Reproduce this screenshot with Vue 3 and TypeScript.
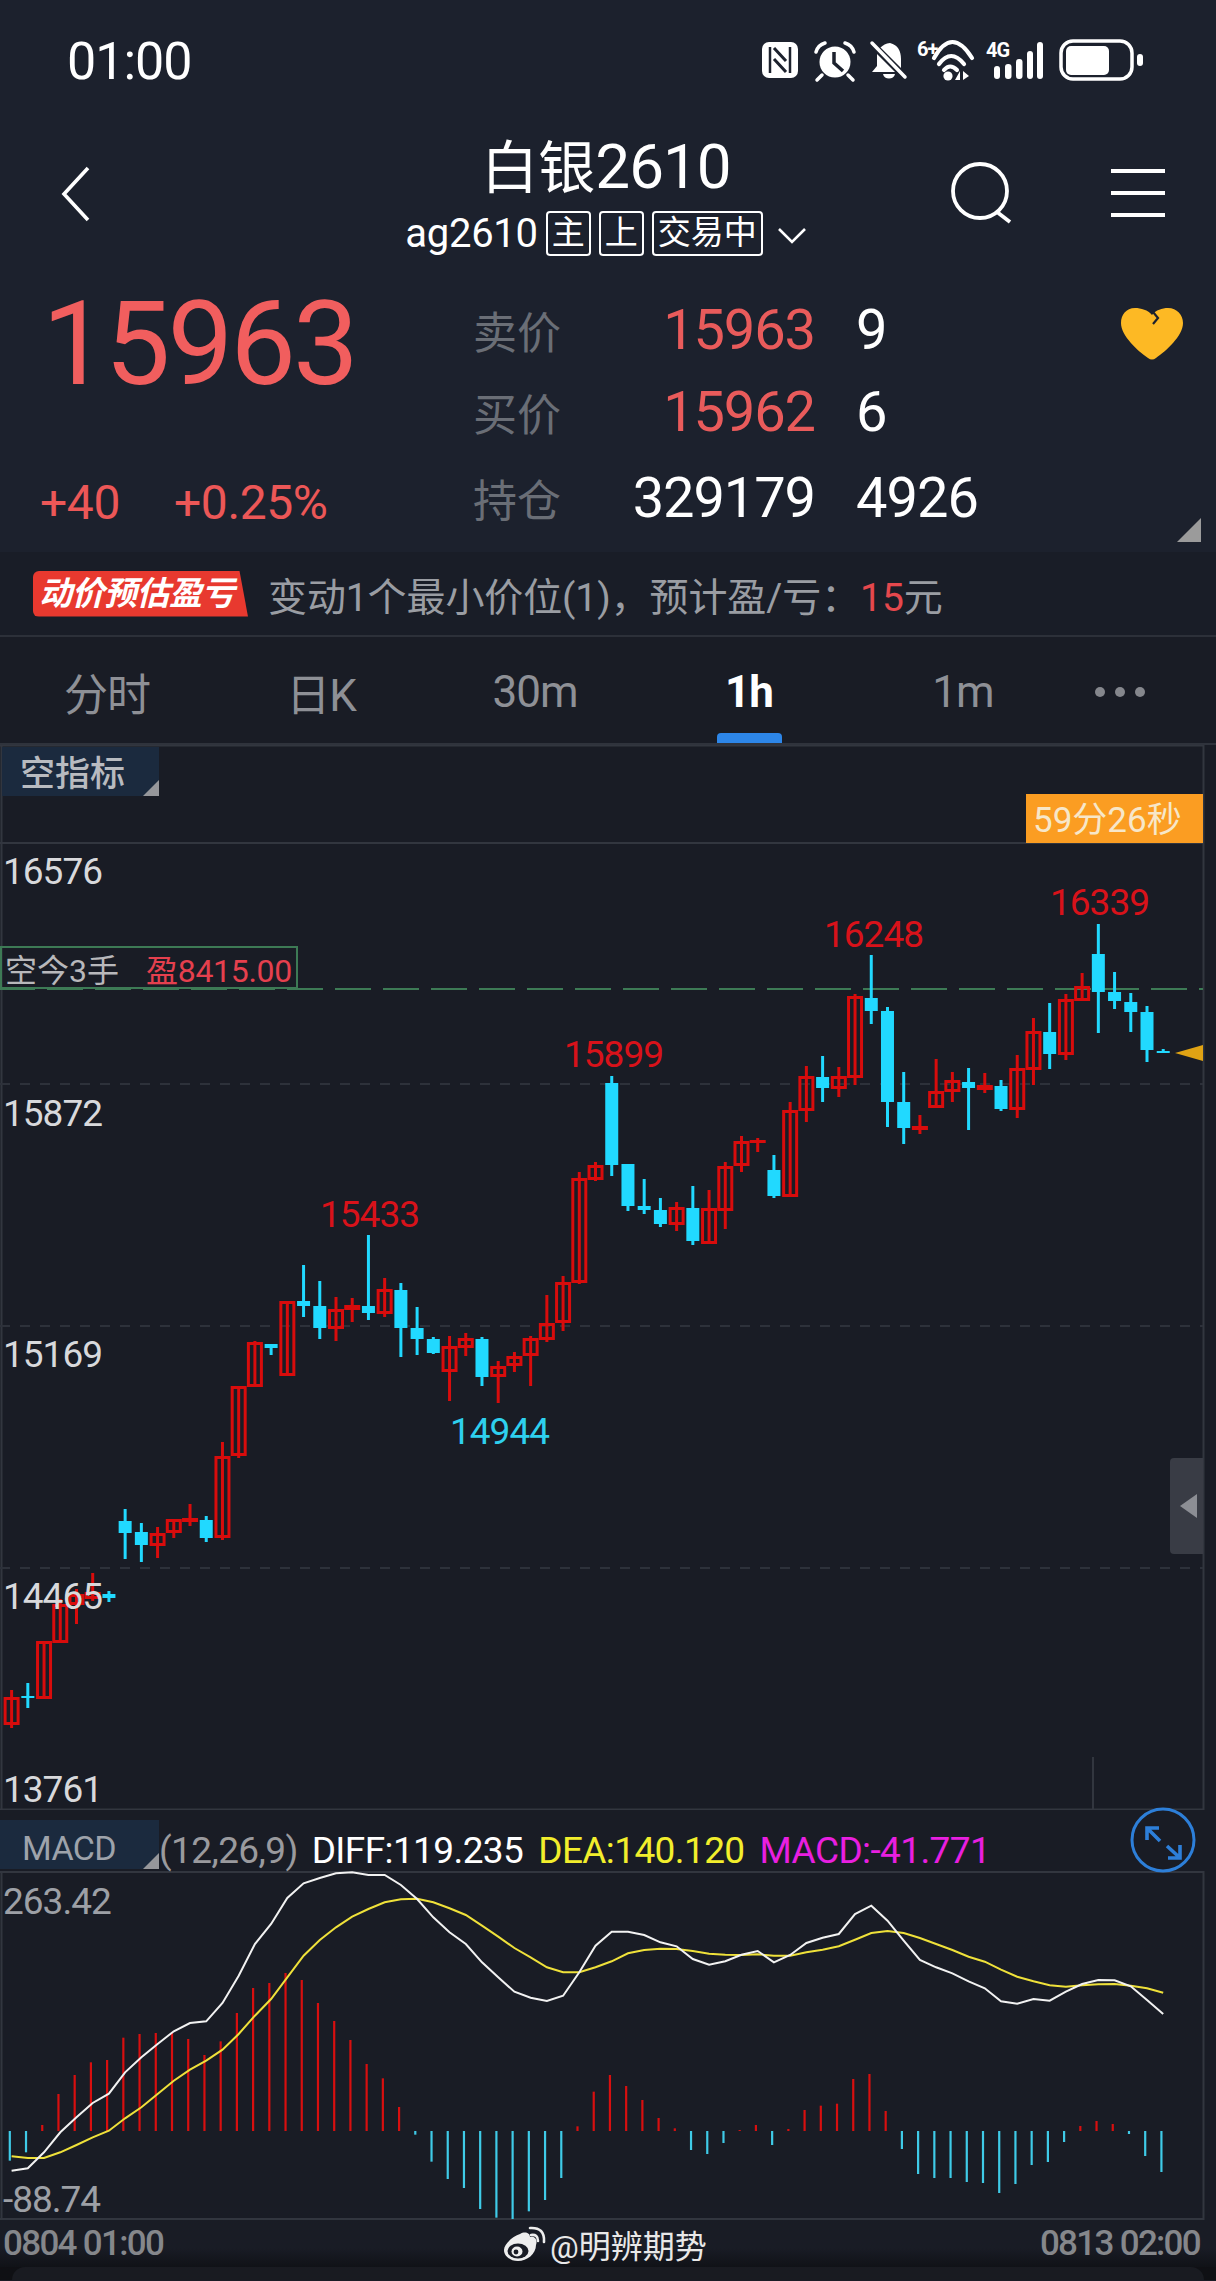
<script setup lang="ts">
type Candle = [number, number, number, number, "r" | "c"];

const step = 16.22;
const candleX = (i: number) => 11.6 + step * i;
const barX = (i: number) => 9.8 + step * i;

// wick top, body top, body bottom, wick bottom
const candles: Candle[] = [
  [1691, 1698, 1726, 1729, "r"], [1684, 1697, 1699, 1709, "c"], [1642, 1642, 1700, 1700, "r"],
  [1600, 1605, 1644, 1644, "r"], [1590, 1595, 1606, 1625, "r"], [1574, 1593, 1600, 1602, "r"],
  [1592, 1595, 1599, 1603, "c"], [1510, 1522, 1534, 1560, "c"], [1524, 1533, 1546, 1563, "c"],
  [1528, 1534, 1547, 1559, "r"], [1520, 1520, 1534, 1539, "r"], [1505, 1519, 1523, 1527, "r"],
  [1517, 1521, 1539, 1543, "c"], [1443, 1457, 1539, 1541, "r"], [1387, 1387, 1457, 1459, "r"],
  [1342, 1343, 1388, 1388, "r"], [1345, 1345, 1349, 1356, "c"], [1302, 1302, 1377, 1377, "r"],
  [1266, 1302, 1307, 1318, "c"], [1282, 1307, 1329, 1340, "c"], [1298, 1310, 1330, 1342, "r"],
  [1299, 1306, 1311, 1323, "r"], [1236, 1307, 1314, 1321, "c"], [1279, 1290, 1315, 1318, "r"],
  [1284, 1291, 1329, 1358, "c"], [1308, 1329, 1340, 1356, "c"], [1338, 1340, 1354, 1355, "c"],
  [1337, 1347, 1373, 1402, "r"], [1334, 1339, 1349, 1357, "r"], [1338, 1340, 1378, 1387, "c"],
  [1362, 1367, 1378, 1404, "r"], [1353, 1357, 1367, 1373, "r"], [1337, 1339, 1357, 1387, "r"],
  [1296, 1324, 1341, 1343, "r"], [1277, 1283, 1324, 1332, "r"], [1173, 1179, 1284, 1285, "r"],
  [1163, 1166, 1181, 1182, "r"], [1077, 1084, 1166, 1177, "c"], [1165, 1165, 1207, 1212, "c"],
  [1180, 1207, 1211, 1215, "c"], [1199, 1211, 1225, 1228, "c"], [1203, 1208, 1226, 1232, "r"],
  [1187, 1209, 1242, 1246, "c"], [1191, 1209, 1245, 1245, "r"], [1163, 1167, 1212, 1230, "r"],
  [1137, 1142, 1167, 1173, "r"], [1139, 1141, 1144, 1153, "r"], [1156, 1171, 1197, 1199, "c"],
  [1103, 1111, 1198, 1198, "r"], [1067, 1077, 1112, 1123, "r"], [1057, 1078, 1089, 1103, "c"],
  [1068, 1077, 1090, 1098, "r"], [995, 997, 1079, 1086, "r"], [956, 999, 1012, 1025, "c"],
  [1008, 1012, 1103, 1128, "c"], [1073, 1103, 1129, 1145, "c"], [1116, 1127, 1131, 1135, "r"],
  [1060, 1092, 1109, 1109, "r"], [1073, 1081, 1093, 1103, "r"], [1069, 1083, 1089, 1131, "c"],
  [1074, 1086, 1091, 1094, "r"], [1081, 1087, 1110, 1112, "c"], [1056, 1069, 1111, 1119, "r"],
  [1019, 1032, 1071, 1086, "r"], [1004, 1033, 1055, 1070, "c"], [995, 1000, 1056, 1061, "r"],
  [974, 987, 1002, 1002, "r"], [925, 955, 993, 1034, "c"], [973, 993, 1002, 1010, "c"],
  [994, 1003, 1013, 1033, "c"], [1007, 1013, 1051, 1063, "c"], [1050, 1052, 1054, 1054, "c"],
];

const priceLabels = [
  { text: "16576", y: 885 },
  { text: "15872", y: 1127 },
  { text: "15169", y: 1368 },
  { text: "14465", y: 1610 },
  { text: "13761", y: 1803 },
];

const peaks = [
  { text: "16339", x: 1050, y: 916, cls: "peak" },
  { text: "16248", x: 824, y: 948, cls: "peak" },
  { text: "15899", x: 564, y: 1068, cls: "peak" },
  { text: "15433", x: 320, y: 1228, cls: "peak" },
  { text: "14944", x: 450, y: 1445, cls: "trough" },
];

// macd values are in 3x crop units, 1800 is the crop's top edge
const toY = (v: number) => 1800 + v / 3;
const zero = toY(996);

const bars = [
  1085, 1060, 978, 885, 828, 790, 783, 716, 705, 702, 700, 720, 768, 727, 642, 567, 552, 522, 543,
  612, 666, 723, 795, 838, 924, 1007, 1088, 1140, 1167, 1230, 1256, 1260, 1237, 1203, 1137, 982,
  878, 828, 861, 903, 957, 988, 1053, 1065, 1032, 993, 978, 1038, 990, 933, 920, 914, 840, 825,
  936, 1050, 1125, 1137, 1137, 1149, 1152, 1182, 1155, 1098, 1089, 1029, 981, 966, 975, 1005, 1071,
  1119,
];

const diff = [
  1115, 1108, 1060, 1000, 955, 912, 884, 820, 775, 735, 697, 672, 667, 612, 530, 435, 375, 297, 253,
  237, 223, 220, 228, 228, 258, 300, 355, 400, 435, 490, 535, 578, 596, 606, 590, 520, 440, 398,
  398, 408, 430, 442, 480, 497, 487, 467, 456, 490, 468, 432, 416, 405, 345, 320, 365, 425, 483,
  505, 523, 547, 568, 607, 614, 600, 605, 578, 555, 543, 544, 562, 603, 645,
];

const dea = [
  1072, 1077, 1077, 1060, 1038, 1015, 995, 958, 925, 885, 845, 812, 785, 752, 705, 650, 600, 535,
  470, 423, 385, 353, 330, 310, 301, 299, 310, 328, 348, 380, 413, 447, 475, 505, 520, 520, 505,
  487, 463, 453, 449, 450, 456, 464, 467, 468, 466, 470, 470, 460, 452, 442, 422, 402, 396, 402,
  417, 435, 453, 473, 488, 512, 533, 547, 559, 563, 559, 556, 555, 560, 568, 581,
];

const points = (vals: number[]) =>
  vals.map((v, i) => `${candleX(i).toFixed(1)},${toY(v).toFixed(1)}`).join(" ");

const tabs = [
  { label: "分时" },
  { label: "日K" },
  { label: "30m" },
  { label: "1h", active: true },
  { label: "1m" },
];
</script>

<template>
  <div class="page">
    <header class="top">
      <div class="status">
        <span class="time">01:00</span>
        <svg class="status-icons" width="384" height="44" viewBox="0 0 384 44">
          <rect x="2" y="3" width="36" height="36" rx="7" fill="#fff" />
          <path d="M10 8V34M30 8V34" stroke="#1c212d" stroke-width="2.5" fill="none" />
          <path d="M14 9L26 22M14 20L26 33" stroke="#1c212d" stroke-width="3" fill="none" />
          <circle cx="75" cy="23" r="15.5" fill="#fff" />
          <path d="M74 13V24L83 32" stroke="#1c212d" stroke-width="3.5" fill="none" />
          <path d="M56 13Q58 6 65 4M94 13Q92 6 85 4M62 36L57 41M88 36L93 41" stroke="#fff" stroke-width="3.5" fill="none" stroke-linecap="round" />
          <path d="M130 4C138 6 141 12 141 20V30L144 33H112L117 27V16C117 11 122 5 130 4ZM123 35H135C134 41 124 41 123 35Z" fill="#fff" />
          <path d="M112 5L145 38" stroke="#1c212d" stroke-width="7" />
          <path d="M112 4L145 38" stroke="#fff" stroke-width="3.5" stroke-linecap="round" />
          <path d="M174 19Q192 -13 212 19M179 25Q191 9 204 25M184 31Q190 24 197 31" stroke="#fff" stroke-width="4.2" fill="none" stroke-linecap="round" />
          <text class="net" x="157" y="17">6+</text>
          <circle cx="188" cy="37" r="4.6" fill="#fff" />
          <path d="M200 32V41L195 41ZM203 32V41L209 37Z" fill="#fff" />
          <text class="net" x="226" y="18">4G</text>
          <rect x="234" y="27" width="6" height="13" rx="3" fill="#fff" />
          <rect x="245" y="25" width="6.5" height="15" rx="3" fill="#fff" />
          <rect x="256" y="20" width="6.5" height="20" rx="3" fill="#fff" />
          <rect x="267" y="12" width="6" height="28" rx="3" fill="#fff" />
          <rect x="277" y="3" width="6" height="37" rx="3" fill="#fff" />
          <rect x="301" y="2" width="71" height="38" rx="12" fill="none" stroke="#fff" stroke-width="3.5" />
          <rect x="306" y="7" width="43" height="29" rx="5" fill="#fff" />
          <rect x="377" y="15" width="6" height="12" rx="3" fill="#fff" />
        </svg>
      </div>

      <nav class="nav">
        <div class="nav-side">
          <svg class="back" width="30" height="56" viewBox="0 0 30 56">
            <path d="M28 2L4 28L28 54" stroke="#fff" stroke-width="3.6" fill="none" />
          </svg>
        </div>
        <div class="nav-mid">
          <div class="title">白银<span class="title-num">2610</span></div>
          <div class="sub">
            <span class="code">ag2610</span>
            <span class="badge">主</span>
            <span class="badge">上</span>
            <span class="badge">交易中</span>
            <svg class="chev" width="30" height="17" viewBox="0 0 30 17">
              <path d="M2 2L15 15L28 2" stroke="#fff" stroke-width="2.6" fill="none" />
            </svg>
          </div>
        </div>
        <div class="nav-side nav-right">
          <svg class="search" width="64" height="62" viewBox="0 0 64 62">
            <circle cx="30" cy="29" r="27" stroke="#fff" stroke-width="3.8" fill="none" />
            <path d="M47 50L60 60" stroke="#fff" stroke-width="3.8" />
          </svg>
          <svg class="menu" width="54" height="50" viewBox="0 0 54 50">
            <path d="M0 3H54M0 25H54M0 47H54" stroke="#fff" stroke-width="4" />
          </svg>
        </div>
      </nav>

      <section class="quote">
        <div class="quote-left">
          <div class="last">15963</div>
          <div class="change">
            <span>+40</span>
            <span>+0.25%</span>
          </div>
        </div>
        <div class="book">
          <div class="row">
            <span class="lbl">卖价</span>
            <span class="val up">15963</span>
            <span class="vol">9</span>
          </div>
          <div class="row">
            <span class="lbl">买价</span>
            <span class="val up">15962</span>
            <span class="vol">6</span>
          </div>
          <div class="row row-oi">
            <span class="lbl">持仓</span>
            <span class="val">329179</span>
            <span class="vol">4926</span>
          </div>
        </div>
        <svg class="heart" width="62" height="52" viewBox="0 0 62 52">
          <path d="M31 7C27 2 20 0 14 0C5 0 0 7 0 15C0 28 17 43 27 50Q31 53 35 50C45 43 62 28 62 15C62 7 56 0 47 0C41 0 35 2 31 7Z" fill="#fdb924" />
          <path d="M32 4L37 10L32 16" stroke="#1c212d" stroke-width="2.2" fill="none" />
        </svg>
        <span class="corner"></span>
      </section>
    </header>

    <div class="hint">
      <span class="hint-tag">动价预估盈亏</span>
      <span class="hint-text">变动1个最小价位(1)，预计盈/亏：<em>15</em>元</span>
    </div>

    <div class="tabs">
      <div v-for="t in tabs" :key="t.label" class="tab" :class="{ active: t.active }">
        {{ t.label }}
      </div>
      <div class="tab tab-more">
        <i></i><i></i><i></i>
      </div>
    </div>

    <section class="chart">
      <svg class="canvas" width="1216" height="1065" viewBox="0 746 1216 1065">
        <path d="M0 844H1203M0 1810.5H1203M1.5 746V1811M1203.5 746V1811M1093 1758V1810M0 746.5H1204" class="grid" />
        <path d="M0 1085H1203M0 1327H1203M0 1569H1203" class="grid-dash" />
        <path d="M0 990H1203" class="pos-line" />
        <g v-for="(c, i) in candles" :key="i">
          <line
            :x1="candleX(i)"
            :x2="candleX(i)"
            :y1="c[0]"
            :y2="c[3]"
            :class="c[4] === 'r' ? 'wick-r' : 'wick-c'"
          />
          <rect
            v-if="c[4] === 'r'"
            class="body-r"
            :x="candleX(i) - 6.5"
            :y="c[1] + 1.5"
            width="13"
            :height="Math.max(c[2] - c[1] - 3, 0.01)"
          />
          <rect
            v-else
            class="body-c"
            :x="candleX(i) - 6.5"
            :y="c[1]"
            width="13"
            :height="Math.max(c[2] - c[1], 2)"
          />
        </g>
        <text v-for="p in peaks" :key="p.text" :class="p.cls" :x="p.x" :y="p.y">{{ p.text }}</text>
        <text v-for="p in priceLabels" :key="p.text" class="axis" x="3" :y="p.y">{{ p.text }}</text>
        <path d="M1203 1046V1062L1175 1054Z" fill="#e0a314" />
      </svg>

      <div class="tag tag-main">空指标</div>
      <div class="timer">59分26秒</div>
      <div class="position">
        <span class="pos-name">空今3手</span>
        <span class="pos-pnl">盈8415.00</span>
      </div>
      <div class="handle"><span></span></div>
    </section>

    <section class="macd-head">
      <div class="tag tag-macd">MACD</div>
      <span class="m-params">(12,26,9)</span>
      <span class="m-diff">DIFF:119.235</span>
      <span class="m-dea">DEA:140.120</span>
      <span class="m-val">MACD:-41.771</span>
      <svg class="expand" width="66" height="66" viewBox="0 0 66 66">
        <circle cx="33" cy="33" r="31" fill="#191c25" stroke="#2d7fd9" stroke-width="3" />
        <path d="M17 33V21H29M18 22L30 34M37 39L49 50M50 38V51H38" stroke="#2d7fd9" stroke-width="3.6" fill="none" />
      </svg>
    </section>

    <section class="macd">
      <svg class="canvas" width="1216" height="349" viewBox="0 1872 1216 349">
        <path d="M0 1873H1204M0 2220H1204M1.5 1872V2221M1203.5 1872V2221" class="grid" />
        <line
          v-for="(b, i) in bars"
          :key="i"
          :x1="barX(i)"
          :x2="barX(i)"
          :y1="zero"
          :y2="toY(b)"
          :class="b < 996 ? 'bar-r' : 'bar-c'"
        />
        <polyline :points="points(dea)" class="line-dea" />
        <polyline :points="points(diff)" class="line-diff" />
        <text class="axis axis-dim" x="3" y="1915">263.42</text>
        <text class="axis axis-dim" x="3" y="2213">-88.74</text>
      </svg>
    </section>

    <footer class="foot">
      <span class="foot-time">0804 01:00</span>
      <span class="mark">
        <svg width="44" height="36" viewBox="0 0 44 36">
          <path d="M17 8C22 5 27 7 27 11C31 10 35 13 33 19C33 28 24 35 15 35C7 35 1 30 1 24C1 18 10 10 17 8Z" fill="#eee" />
          <ellipse cx="15" cy="25" rx="10.5" ry="7.5" fill="#191c25" />
          <ellipse cx="14" cy="25.5" rx="5.5" ry="5" fill="#eee" />
          <circle cx="13" cy="26" r="2.4" fill="#191c25" />
          <path d="M27 2Q42 1 41 16M28 9Q35 8 35 15" stroke="#eee" stroke-width="2.6" fill="none" stroke-linecap="round" />
        </svg>
        <span>@明辨期势</span>
      </span>
      <span class="foot-time foot-end">0813 02:00</span>
    </footer>
    <div class="bottom"><div class="bottom-in"></div></div>
  </div>
</template>

<style scoped>
.page {
  width: 1216px;
  height: 2281px;
  overflow: hidden;
  background: #191c25;
  color: #fff;
  font-family: Roboto, "Noto Sans CJK SC", sans-serif;
}

.top {
  height: 552px;
  background: #1c212d;
}

.status {
  height: 100px;
  box-sizing: border-box;
  padding: 22px 72px 0 67px;
  display: flex;
  align-items: center;
  justify-content: space-between;
}
.time {
  font-size: 52px;
  letter-spacing: -1px;
}
.status-icons {
  overflow: visible;
}
.net {
  font-size: 20px;
  font-weight: 700;
  fill: #fff;
  letter-spacing: -1px;
}

.nav {
  height: 170px;
  display: flex;
}
.nav-side {
  width: 160px;
  flex: none;
  display: flex;
  align-items: flex-start;
}
.back {
  margin: 66px 0 0 60px;
}
.nav-right {
  justify-content: flex-end;
  padding-right: 51px;
  box-sizing: border-box;
  width: 270px;
}
.search {
  margin: 62px 97px 0 0;
}
.menu {
  margin-top: 68px;
}
.nav-mid {
  flex: 1;
  margin-right: -110px;
  padding-top: 32px;
  display: flex;
  flex-direction: column;
  align-items: center;
  transform: translateX(-2px);
}
.title {
  font-size: 57px;
  line-height: 70px;
  white-space: nowrap;
}
.title-num {
  font-size: 62px;
  letter-spacing: -1px;
}
.sub {
  margin-top: 6px;
  display: flex;
  align-items: center;
  gap: 8px;
}
.code {
  font-size: 40px;
  letter-spacing: -0.3px;
}
.badge {
  height: 45px;
  box-sizing: border-box;
  padding: 0 4px;
  border: 2px solid #fff;
  border-radius: 4px;
  font-size: 33px;
  line-height: 40px;
}
.chev {
  margin: 4px 0 0 6px;
}

.quote {
  position: relative;
  height: 282px;
  display: flex;
}
.quote-left {
  width: 475px;
  flex: none;
}
.last {
  margin: 14px 0 0 42px;
  font-size: 117px;
  line-height: 120px;
  letter-spacing: -3px;
  color: #f15e5e;
}
.change {
  margin: 74px 0 0 40px;
  display: flex;
  gap: 54px;
  font-size: 48px;
  line-height: 50px;
  color: #ec5757;
  letter-spacing: -0.4px;
}
.book {
  padding-top: 30px;
}
.row {
  height: 60px;
  display: flex;
  align-items: center;
}
.row + .row {
  margin-top: 22px;
}
.row-oi {
  margin-top: 26px !important;
}
.lbl {
  width: 87px;
  flex: none;
  font-size: 44px;
  color: #6a6e76;
  white-space: nowrap;
  margin-left: -2px;
  margin-right: 2px;
}
.val {
  width: 253px;
  flex: none;
  text-align: right;
  font-size: 56px;
  letter-spacing: -1.1px;
}
.vol {
  margin-left: 41px;
  font-size: 56px;
  letter-spacing: -1px;
}
.up {
  color: #e95b5b;
}
.heart {
  position: absolute;
  left: 1121px;
  top: 38px;
}
.corner {
  position: absolute;
  left: 1177px;
  top: 248px;
  width: 24px;
  height: 24px;
  background: #9b9b9b;
  clip-path: polygon(100% 0, 100% 100%, 0 100%);
}

.hint {
  height: 85px;
  box-sizing: border-box;
  border-bottom: 2px solid #2c3039;
  padding-left: 33px;
  display: flex;
  align-items: center;
  background: #191d27;
}
.hint-tag {
  width: 215px;
  height: 46px;
  flex: none;
  box-sizing: border-box;
  padding-left: 6px;
  background: #e8392f;
  border-radius: 6px 0 0 6px;
  clip-path: polygon(0 0, 96% 0, 100% 100%, 0 100%);
  font-size: 33px;
  line-height: 46px;
  font-weight: 700;
  font-style: italic;
  letter-spacing: -0.5px;
  white-space: nowrap;
}
.hint-text {
  margin-left: 20px;
  font-size: 39px;
  color: #9a9da3;
  white-space: nowrap;
  letter-spacing: -0.1px;
}
.hint-text em {
  font-style: normal;
  color: #e5484d;
}

.tabs {
  height: 108px;
  box-sizing: border-box;
  border-bottom: 2px solid #2f333c;
  display: grid;
  grid-template-columns: repeat(5, 214px) 100px;
  background: #191c25;
}
.tab {
  position: relative;
  display: flex;
  align-items: center;
  justify-content: center;
  padding-top: 3px;
  font-size: 44px;
  color: #8e9096;
  letter-spacing: -1px;
}
.tab.active {
  color: #fff;
  font-weight: 700;
}
.tab.active::after {
  content: "";
  position: absolute;
  left: 75px;
  bottom: 0;
  width: 65px;
  height: 10px;
  background: #2d86e8;
  border-radius: 4px 4px 0 0;
}
.tab-more {
  gap: 10px;
}
.tab-more i {
  width: 10px;
  height: 10px;
  border-radius: 50%;
  background: #85878d;
}

.chart {
  position: relative;
  height: 1065px;
}
.canvas {
  display: block;
}
.grid {
  stroke: #32363f;
  stroke-width: 2;
  fill: none;
}
.grid-dash {
  stroke: #2d313a;
  stroke-width: 2;
  stroke-dasharray: 10 10;
  fill: none;
}
.pos-line {
  stroke: #3d7a55;
  stroke-width: 2;
  stroke-dasharray: 36 12;
  stroke-dashoffset: 1;
  fill: none;
}
.wick-r {
  stroke: #d80c0c;
  stroke-width: 3;
}
.wick-c {
  stroke: #21d9ff;
  stroke-width: 3;
}
.body-r {
  fill: none;
  stroke: #d80c0c;
  stroke-width: 3;
}
.body-c {
  fill: #21d9ff;
}
.bar-r {
  stroke: #d80f0f;
  stroke-width: 2.2;
}
.bar-c {
  stroke: #3fcbe8;
  stroke-width: 2.2;
}
.line-diff {
  fill: none;
  stroke: #f2f2f2;
  stroke-width: 2;
}
.line-dea {
  fill: none;
  stroke: #efe13a;
  stroke-width: 2;
}
.peak,
.trough,
.axis {
  font-size: 37px;
  letter-spacing: -1px;
}
.peak {
  fill: #d8121a;
}
.trough {
  fill: #2ed0ee;
}
.axis {
  fill: #d8d9dc;
}
.axis-dim {
  fill: #9da0a6;
}

.tag {
  box-sizing: border-box;
  position: relative;
  width: 159px;
  height: 49px;
  background: #1b2a3e;
}
.tag::after {
  content: "";
  position: absolute;
  right: 0;
  bottom: 0;
  width: 16px;
  height: 16px;
  background: #96979b;
  clip-path: polygon(100% 0, 100% 100%, 0 100%);
}
.tag-main {
  position: absolute;
  left: 2px;
  top: 2px;
  width: 157px;
  padding-left: 18px;
  font-size: 35px;
  line-height: 55px;
  font-weight: 500;
  color: #b8bbc0;
}
.timer {
  position: absolute;
  left: 1026px;
  top: 49px;
  width: 177px;
  height: 49px;
  padding-left: 7px;
  box-sizing: border-box;
  background: #fb9d22;
  color: #f7e7c9;
  font-size: 35px;
  line-height: 53px;
  letter-spacing: 0;
  white-space: nowrap;
}
.position {
  position: absolute;
  left: 0;
  top: 201px;
  width: 298px;
  height: 43px;
  box-sizing: border-box;
  border: 2px solid #3d7a55;
  padding-left: 3px;
  display: flex;
  align-items: center;
  white-space: nowrap;
}
.pos-name {
  width: 141px;
  font-size: 32px;
  color: #b8b8bb;
}
.pos-pnl {
  font-size: 32px;
  color: #e5404e;
  letter-spacing: -0.3px;
}
.handle {
  position: absolute;
  left: 1170px;
  top: 713px;
  width: 33px;
  height: 96px;
  background: #393c45;
  border-radius: 4px 0 0 4px;
  display: flex;
  align-items: center;
  justify-content: flex-end;
}
.handle span {
  width: 17px;
  height: 24px;
  margin-right: 6px;
  background: #8c8e94;
  clip-path: polygon(100% 0, 100% 100%, 0 50%);
}

.macd-head {
  position: relative;
  height: 61px;
  display: flex;
  align-items: flex-start;
  font-size: 37px;
  letter-spacing: -0.6px;
  white-space: nowrap;
}
.macd-head > span {
  line-height: 56px;
  margin-top: 13px;
}
.tag-macd {
  margin-top: 10px;
  width: 159px;
  padding-left: 22px;
  font-size: 34px;
  line-height: 56px;
  color: #9ea3ab;
}
.m-params {
  margin-left: 0;
  color: #9a9a9e;
}
.m-diff {
  margin-left: 14px;
  color: #fff;
}
.m-dea {
  margin-left: 15px;
  color: #f2ee2c;
}
.m-val {
  margin-left: 15px;
  color: #e81fe0;
}
.expand {
  position: absolute;
  left: 1130px;
  top: -3px;
}

.macd {
  height: 349px;
}

.foot {
  height: 47px;
  display: flex;
  align-items: center;
  padding-left: 3px;
  background: linear-gradient(#191c25 60%, #101217);
}
.foot-time {
  font-size: 35px;
  font-weight: 500;
  color: #85878b;
  letter-spacing: -1.7px;
  white-space: nowrap;
}
.foot-end {
  margin-left: auto;
  margin-right: 16px;
}
.mark {
  margin-left: 340px;
  display: flex;
  align-items: center;
  gap: 3px;
  font-size: 32px;
  color: #e8e8e8;
  white-space: nowrap;
}

.bottom {
  height: 13px;
  background: #0f1014;
}
.bottom-in {
  height: 13px;
  margin: 0 12px;
  background: #191b21;
  border-radius: 14px 14px 0 0;
}
</style>

<style>
body {
  background: #191c25;
}
</style>
